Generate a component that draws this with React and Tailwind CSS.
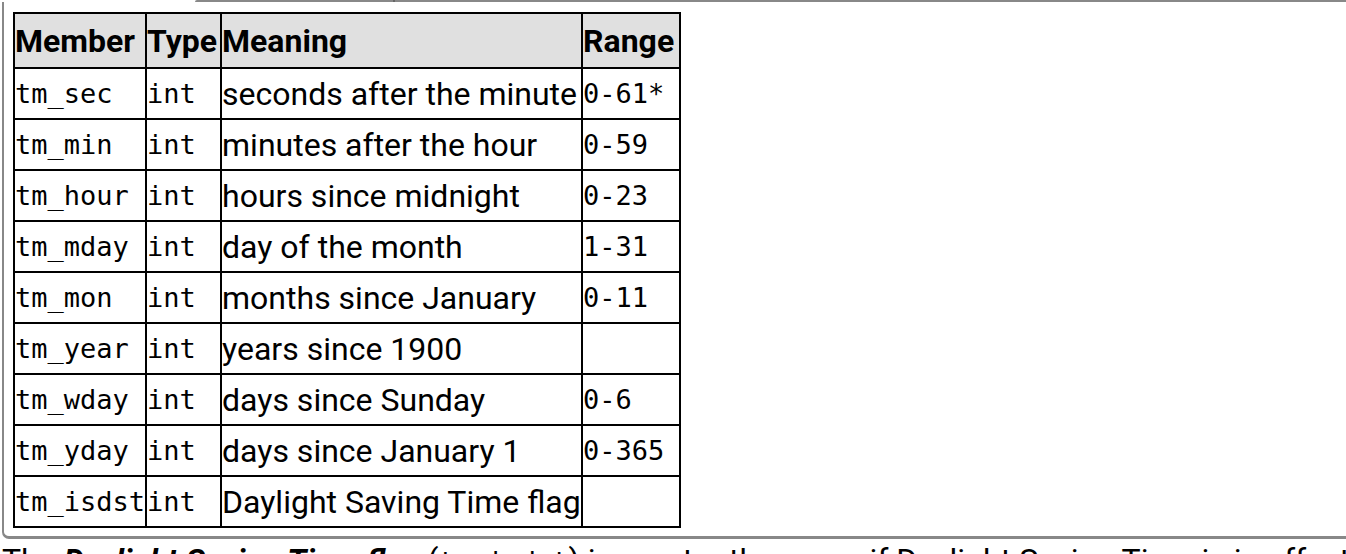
const rows = [
  ["tm_sec", "int", "seconds after the minute", "0-61*"],
  ["tm_min", "int", "minutes after the hour", "0-59"],
  ["tm_hour", "int", "hours since midnight", "0-23"],
  ["tm_mday", "int", "day of the month", "1-31"],
  ["tm_mon", "int", "months since January", "0-11"],
  ["tm_year", "int", "years since 1900", ""],
  ["tm_wday", "int", "days since Sunday", "0-6"],
  ["tm_yday", "int", "days since January 1", "0-365"],
  ["tm_isdst", "int", "Daylight Saving Time flag", ""],
];

const mono = "font-['DejaVu_Sans_Mono',monospace] text-[27px]";
const cell = "border-2 border-black p-0 leading-[40px] whitespace-nowrap";

export default function App() {
  return (
    <div className="h-[554px] w-[1346px] overflow-hidden bg-white font-['Roboto',sans-serif] text-black">
      {/* tab strip edge */}
      <div className="flex h-[2px]">
        <div className="w-[195px]" />
        <div className="w-[198px] rounded-tl-[4px] bg-[#888]" />
        <div className="w-[2px] bg-[#666]" />
        <div className="flex-1 bg-[#888]" />
      </div>

      <div className="ml-[2px] h-[537px] rounded-bl-[7px] border-b-[3px] border-l-[2px] border-[#888] pl-[9px] pt-[10px]">
        <table className="table-fixed border-collapse border-2 border-black">
          <colgroup>
            <col className="w-[132px]" />
            <col className="w-[75px]" />
            <col className="w-[361px]" />
            <col className="w-[98px]" />
          </colgroup>
          <thead>
            <tr className="h-[55px] bg-[#e0e0e0] text-[32px] font-bold">
              <th className={`text-left ${cell}`}>Member</th>
              <th className={`text-left ${cell}`}>Type</th>
              <th className={`text-left ${cell}`}>Meaning</th>
              <th className={`text-left ${cell}`}>Range</th>
            </tr>
          </thead>
          <tbody>
            {rows.map((r) => (
              <tr key={r[0]} className="h-[51px]">
                <td className={`${cell} ${mono}`}>{r[0]}</td>
                <td className={`${cell} ${mono}`}>{r[1]}</td>
                <td className={`${cell} text-[32px]`}>{r[2]}</td>
                <td className={`${cell} ${mono}`}>{r[3]}</td>
              </tr>
            ))}
          </tbody>
        </table>
      </div>

      <p className="pl-[2px] pt-[2px] text-[32px] leading-[38px] whitespace-nowrap">
        The <b><i>Daylight Saving Time flag</i></b> (<span className={mono}>tm_isdst</span>) is greater than zero if Daylight Saving Time is in effect
      </p>
    </div>
  );
}
